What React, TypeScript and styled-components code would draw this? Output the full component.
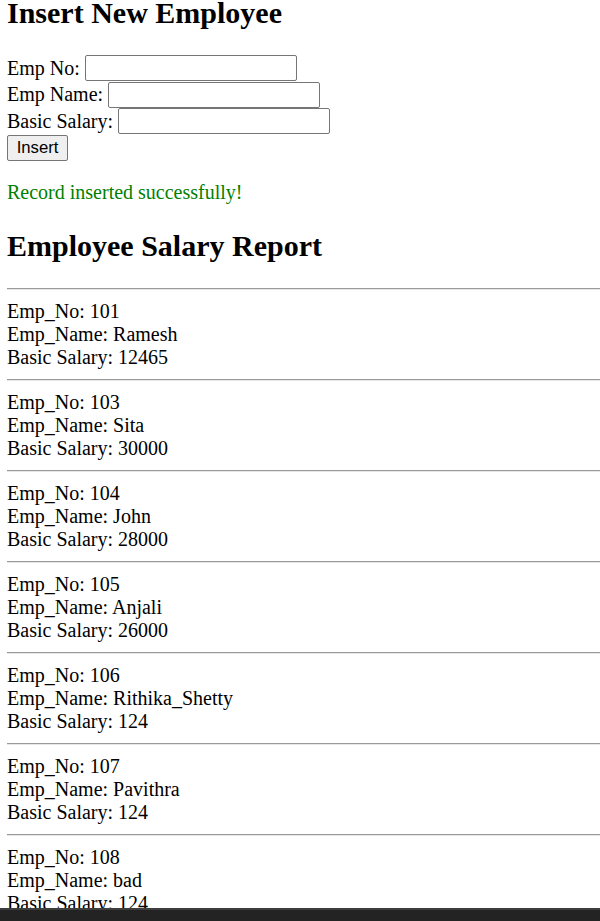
import React from "react";
import styled, { createGlobalStyle } from "styled-components";

const Global = createGlobalStyle`
  html, body {
    margin: 0;
    padding: 0;
    background: #ffffff;
    overflow: hidden;
  }
  body {
    font-family: "Liberation Serif", "Times New Roman", serif;
    font-size: 20px;
    line-height: 23px;
    color: #000000;
  }
`;

const Page = styled.div`
  padding-left: 7px;
`;

const Title = styled.h1`
  margin: 0;
  font-size: 30px;
  line-height: 26px;
  font-weight: bold;
`;

const Form = styled.form`
  margin-top: 29px;
  display: flex;
  flex-direction: column;
  align-items: flex-start;
`;

const Row = styled.label`
  display: flex;
  align-items: center;
  gap: 5px;
  height: 26.6px;
`;

const Input = styled.input`
  box-sizing: border-box;
  width: 212px;
  height: 26px;
  margin: 0;
  padding: 1px 3px;
  border: 1px solid #767676;
  border-radius: 2px;
  background: #ffffff;
  font-family: "Liberation Sans", Arial, sans-serif;
  font-size: 16px;
`;

const Button = styled.button`
  box-sizing: border-box;
  margin-top: 0;
  width: 61px;
  height: 26px;
  padding: 0;
  border: 1px solid #767676;
  border-radius: 2px;
  background: #efefef;
  color: #000000;
  font-family: "Liberation Sans", Arial, sans-serif;
  font-size: 16.7px;
  line-height: 24px;
`;

const Message = styled.p`
  margin: 20px 0 0;
  color: #008000;
`;

const Subtitle = styled.h2`
  margin: 25px 0 25px;
  font-size: 30px;
  line-height: 34px;
  font-weight: bold;
`;

const Divider = styled.hr`
  margin: 10px 0;
  height: 0;
  border: none;
  border-top: 1px solid #9a9a9a;
  border-bottom: 1px solid #e6e6e6;
`;

const Record = styled.div`
  line-height: 23px;
`;

const Taskbar = styled.div`
  position: fixed;
  left: 0;
  right: 0;
  bottom: 0;
  height: 11px;
  background: #232323;
  border-top: 2px solid #3e3e3e;
`;

const employees = [
  { no: 101, name: "Ramesh", salary: 12465 },
  { no: 103, name: "Sita", salary: 30000 },
  { no: 104, name: "John", salary: 28000 },
  { no: 105, name: "Anjali", salary: 26000 },
  { no: 106, name: "Rithika_Shetty", salary: 124 },
  { no: 107, name: "Pavithra", salary: 124 },
  { no: 108, name: "bad", salary: 124 },
];

export default function App() {
  return (
    <>
      <Global />
      <Page>
        <Title>Insert New Employee</Title>
        <Form onSubmit={(e) => e.preventDefault()}>
          <Row>
            Emp No: <Input type="text" />
          </Row>
          <Row>
            Emp Name: <Input type="text" />
          </Row>
          <Row>
            Basic Salary: <Input type="text" />
          </Row>
          <Button type="submit">Insert</Button>
        </Form>
        <Message>Record inserted successfully!</Message>
        <Subtitle>Employee Salary Report</Subtitle>
        {employees.map((e) => (
          <React.Fragment key={e.no}>
            <Divider />
            <Record>
              Emp_No: {e.no}
              <br />
              Emp_Name: {e.name}
              <br />
              Basic Salary: {e.salary}
            </Record>
          </React.Fragment>
        ))}
        <Divider />
      </Page>
      <Taskbar />
    </>
  );
}
